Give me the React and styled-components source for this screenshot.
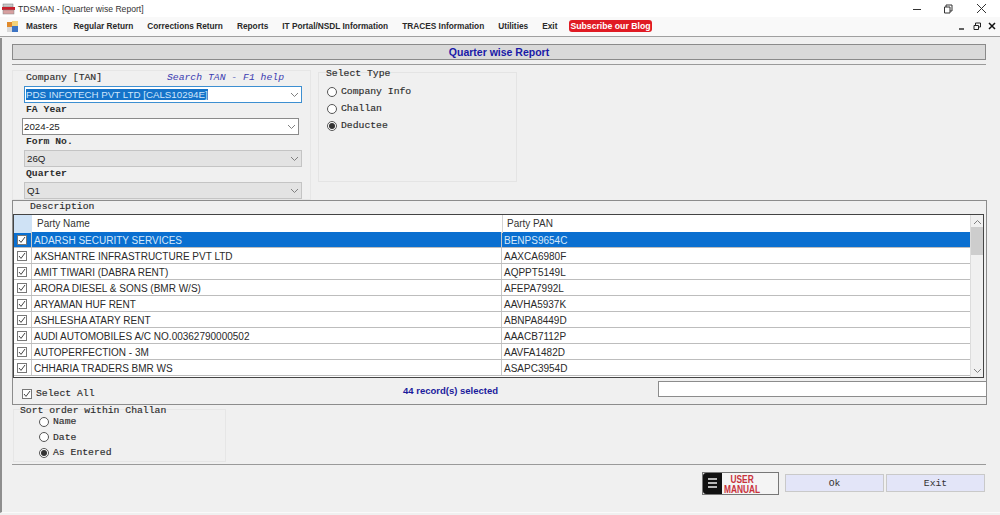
import styled, { createGlobalStyle } from 'styled-components';

const GlobalStyle = createGlobalStyle`
  html, body {
    margin: 0;
    padding: 0;
    background: #f0f0f0;
    overflow: hidden;
  }
`;

const Page = styled.div`
  width: 1000px;
  height: 515px;
  overflow: hidden;
  display: flex;
  flex-direction: column;
  background: #f0f0f0;
  font-family: "Liberation Sans", Arial, sans-serif;
`;

const TitleBar = styled.div`
  height: 17px;
  flex: none;
  display: flex;
  align-items: center;
  background: #fff;
  padding-left: 2px;
  font-size: 8.6px;
  color: #333;
`;

const TitleText = styled.span`
  margin-left: 3px;
`;

const WindowButtons = styled.div`
  margin-left: auto;
  display: flex;
  align-items: center;
  gap: 21px;
  padding-right: 13px;
  svg:last-child {
    margin-left: 2px;
  }
`;

const MenuBar = styled.div`
  height: 20px;
  flex: none;
  box-sizing: border-box;
  display: flex;
  align-items: center;
  padding: 0 0 1px 7px;
  background: #f9f9f9;
  border-bottom: 1px solid #a0a0a0;
`;

const MenuItems = styled.div`
  display: flex;
  align-items: center;
  gap: 14px;
  margin-left: 8px;
`;

const MenuItem = styled.span`
  font-size: 8.3px;
  font-weight: 700;
  color: #2a2a2a;
  white-space: nowrap;
  &:first-child {
    margin-right: 2px;
  }
`;

const BlogBadge = styled.span`
  font-size: 8.7px;
  font-weight: 700;
  color: #fff;
  background: #e01b24;
  border-radius: 3px;
  padding: 1px 1px;
  margin-left: -2px;
  white-space: nowrap;
`;

const MdiButtons = styled.div`
  margin-left: auto;
  display: flex;
  align-items: center;
  gap: 7px;
  padding-right: 4px;
`;

const Body = styled.div`
  flex: 1;
  min-height: 0;
  margin: 1px 0 2px;
  border-left: 2px solid #8e8e8e;
  border-bottom: 1px solid #fafafa;
  padding: 6px 14px 0 10px;
`;

const ReportHeader = styled.div`
  height: 14px;
  background: #d9d9d9;
  border: 1px solid #8a8a8a;
  text-align: center;
  font-size: 10.5px;
  font-weight: 700;
  line-height: 14px;
  color: #1a1aa8;
`;

const Rule = styled.div`
  height: 1px;
  background: #9a9a9a;
  margin-top: ${({ $top }) => $top}px;
`;

const TopRow = styled.div`
  display: flex;
  height: 135px;
`;

const FormPanel = styled.div`
  width: 299px;
  height: 130px;
  margin-top: 5px;
  border: 1px solid #e6e6e6;
  box-sizing: border-box;
  padding: 0 8px 0 11px;
  display: flex;
  flex-direction: column;
`;

const Mono = styled.span`
  font-family: "Liberation Mono", "Courier New", monospace;
  font-size: 9.75px;
  color: #2d2d2d;
  white-space: nowrap;
  -webkit-text-stroke: 0.15px #2d2d2d;
`;

const FieldLabel = styled(Mono)`
  display: flex;
  justify-content: space-between;
  height: 15px;
  line-height: 14px;
  padding-left: 2px;
  font-weight: ${({ $bold }) => ($bold ? 700 : 400)};
  -webkit-text-stroke: ${({ $bold }) => ($bold ? '0' : '0.15px #2d2d2d')};
`;

const HelpText = styled.i`
  color: #3b3bb0;
  -webkit-text-stroke: 0;
  margin-right: 18px;
`;

const Combo = styled.div`
  height: 17px;
  box-sizing: border-box;
  display: flex;
  align-items: center;
  margin-left: ${({ $shift }) => $shift || 0}px;
  margin-right: ${({ $shift }) => ($shift ? 3 : 0)}px;
  padding: 0 2px 0 ${({ $off }) => ($off ? 2 : 1)}px;
  border: 1px solid ${({ $accent, $off }) => ($accent ? '#3d8fd1' : $off ? '#c4c4c4' : '#8a8a8a')};
  background: ${({ $off }) => ($off ? '#e3e3e3' : '#fff')};
  font-size: 9.75px;
  color: #222;
  svg {
    margin-left: auto;
  }
`;

const SelectedText = styled.span`
  background: #1573c9;
  color: #cfe6fb;
`;

const TypeBox = styled.div`
  width: 199px;
  height: 110px;
  margin: 7px 0 0 7px;
  box-sizing: border-box;
  border: 1px solid #e4e4e4;
  padding: 0 0 0 7px;
`;

const BoxTitle = styled(Mono)`
  display: block;
  height: 10px;
  line-height: 10px;
  margin-top: -4px;
`;

const RadioList = styled.div`
  display: flex;
  flex-direction: column;
  gap: ${({ $gap }) => $gap}px;
  margin-top: ${({ $top }) => $top}px;
  margin-left: ${({ $left }) => $left || 0}px;
`;

const RadioRow = styled.div`
  display: flex;
  align-items: center;
  gap: 4px;
  height: 11px;
`;

const RadioCircle = styled.span`
  width: 10px;
  height: 10px;
  box-sizing: border-box;
  flex: none;
  border-radius: 50%;
  border: 1px solid #555;
  background: #fff;
  display: flex;
  align-items: center;
  justify-content: center;
  &::after {
    content: '';
    display: ${({ $on }) => ($on ? 'block' : 'none')};
    width: 6px;
    height: 6px;
    border-radius: 50%;
    background: #333;
  }
`;

const DescriptionBox = styled.div`
  height: 205px;
  box-sizing: border-box;
  border: 1px solid #8c8c8c;
  width: 975px;
`;

const DescriptionTitle = styled(Mono)`
  display: block;
  height: 13px;
  line-height: 12px;
  padding-left: 17px;
`;

const GridFrame = styled.div`
  display: flex;
  height: 164px;
  box-sizing: border-box;
  margin-right: 2px;
  border: 1px solid #444;
  background: #fff;
`;

const GridBody = styled.div`
  flex: 1;
  min-width: 0;
`;

const GridRow = styled.div`
  display: grid;
  grid-template-columns: 18px 470px 1fr;
  height: 16px;
  box-sizing: border-box;
  border-bottom: 1px solid #bdbdbd;
  font-size: 10px;
  line-height: 17px;
  color: ${({ $active }) => ($active ? '#d5e8fa' : '#2a2a2a')};
  background: ${({ $active }) => ($active ? '#0a6fd0' : '#fff')};
`;

const HeaderRow = styled(GridRow)`
  height: 17px;
  border-bottom: none;
  line-height: 18px;
  color: #333;
`;

const CornerCell = styled.div`
  background: #cfe2f5;
`;

const HeaderCell = styled.div`
  padding-left: ${({ $pad }) => $pad}px;
  border-left: ${({ $line }) => ($line ? '1px solid #d4d4d4' : 'none')};
`;

const CheckCell = styled.div`
  display: flex;
  align-items: center;
  justify-content: center;
  padding-right: 1px;
  border-right: 1px solid #c8c8c8;
`;

const TextCell = styled.div`
  padding-left: 2px;
  white-space: nowrap;
  overflow: hidden;
  border-right: ${({ $line }) => ($line ? '1px solid #c8c8c8' : 'none')};
`;

const CheckMark = styled.span`
  width: 10px;
  height: 10px;
  box-sizing: border-box;
  flex: none;
  display: flex;
  align-items: center;
  justify-content: center;
  border: 1px solid #777;
  background: #fff;
`;

const ScrollBar = styled.div`
  width: 13px;
  flex: none;
  display: flex;
  flex-direction: column;
  align-items: center;
  background: #f0f0f0;
  border-left: 1px solid #dcdcdc;
  padding: 4px 0 3px;
  box-sizing: border-box;
`;

const ScrollThumb = styled.div`
  width: 100%;
  height: 28px;
  margin-top: 2px;
  background: #cdcdcd;
`;

const ScrollEnd = styled.div`
  margin-top: auto;
  line-height: 0;
`;

const FooterRow = styled.div`
  display: flex;
  align-items: flex-start;
  padding-top: 3px;
`;

const SelectAll = styled.div`
  width: 390px;
  display: flex;
  align-items: center;
  gap: 4px;
  padding: 7px 0 0 9px;
  box-sizing: border-box;
`;

const RecordCount = styled.span`
  width: 255px;
  padding-top: 4px;
  font-size: 9.5px;
  font-weight: 700;
  color: #1a1a9c;
`;

const SearchInput = styled.div`
  flex: 1;
  height: 16px;
  margin-right: -1px;
  box-sizing: border-box;
  border: 1px solid #8c8c8c;
  background: #fff;
`;

const SortBox = styled.div`
  width: 213px;
  height: 53px;
  margin: 4px 0 0 1px;
  box-sizing: border-box;
  border: 1px solid #e6e6e6;
  padding-left: 6px;
`;

const ActionBar = styled.div`
  display: flex;
  align-items: flex-start;
  justify-content: flex-end;
  padding-top: 7px;
  width: 973px;
`;

const ManualButton = styled.div`
  width: 77px;
  height: 23px;
  box-sizing: border-box;
  border: 1px solid #777;
  background: #f4f4f4;
  display: flex;
  align-items: center;
  margin-right: 6px;
`;

const ManualText = styled.span`
  font-size: 11px;
  line-height: 10px;
  font-weight: 700;
  color: #c8323c;
  margin-left: 1px;
  text-align: center;
  transform: scaleX(0.76);
  transform-origin: left center;
`;

const ActionButton = styled.button`
  width: 99px;
  height: 18px;
  box-sizing: border-box;
  margin: 2px 0 0 ${({ $left }) => $left || 0}px;
  padding: 0;
  border: 1px solid #c9c9c9;
  background: #e3e5f8;
  font-family: "Liberation Mono", "Courier New", monospace;
  font-size: 9.75px;
  color: #333;
`;

const parties = [
  ['ADARSH SECURITY SERVICES', 'BENPS9654C'],
  ['AKSHANTRE INFRASTRUCTURE PVT LTD', 'AAXCA6980F'],
  ['AMIT TIWARI  (DABRA RENT)', 'AQPPT5149L'],
  ['ARORA DIESEL & SONS (BMR W/S)', 'AFEPA7992L'],
  ['ARYAMAN HUF RENT', 'AAVHA5937K'],
  ['ASHLESHA ATARY RENT', 'ABNPA8449D'],
  ['AUDI AUTOMOBILES A/C NO.00362790000502', 'AAACB7112P'],
  ['AUTOPERFECTION - 3M', 'AAVFA1482D'],
  ['CHHARIA TRADERS BMR WS', 'ASAPC3954D'],
];

const menus = [
  'Masters',
  'Regular Return',
  'Corrections Return',
  'Reports',
  'IT Portal/NSDL Information',
  'TRACES Information',
  'Utilities',
  'Exit',
];

const Chevron = ({ color = '#808080', up = false }) => (
  <svg width="9" height="6" viewBox="0 0 9 6">
    <path d={up ? 'M1 5 L4.5 1.5 L8 5' : 'M1 1 L4.5 4.5 L8 1'} fill="none" stroke={color} strokeWidth="1" />
  </svg>
);

const Check = () => (
  <CheckMark>
    <svg width="8" height="8" viewBox="0 0 8 8">
      <path d="M1 4 L3 6.4 L7 1" fill="none" stroke="#444" strokeWidth="1" />
    </svg>
  </CheckMark>
);

const Radio = ({ label, on }) => (
  <RadioRow>
    <RadioCircle $on={on} />
    <Mono>{label}</Mono>
  </RadioRow>
);

const AppIcon = () => (
  <svg width="13" height="12" viewBox="0 0 13 12">
    <rect x="1" y="1" width="10" height="3" fill="#c9c9c9" stroke="#777" strokeWidth="0.5" />
    <rect x="0" y="4" width="13" height="3" fill="#c8202c" />
    <rect x="1" y="7" width="11" height="4" fill="#d8a0a0" stroke="#888" strokeWidth="0.5" />
  </svg>
);

const DocIcon = () => (
  <svg width="11" height="11" viewBox="0 0 11 11">
    <rect x="0" y="1" width="5" height="5" fill="#e08a2c" />
    <rect x="5" y="0" width="6" height="5" fill="#f3d27a" />
    <rect x="0" y="6" width="5" height="5" fill="#d9d9d9" />
    <rect x="5" y="5" width="6" height="6" fill="#3d74c4" />
  </svg>
);

const ManualIcon = () => (
  <svg width="20" height="21" viewBox="0 0 20 21">
    <path d="M3 0 H19 V21 H3 Q0 21 0 18 V3 Q0 0 3 0 Z" fill="#111" />
    <path d="M5 6 H14 M5 10 H14 M5 14 H14" stroke="#eee" strokeWidth="1.4" />
  </svg>
);

const App = () => {
  return (
    <Page>
      <GlobalStyle />
      <TitleBar>
        <AppIcon />
        <TitleText>TDSMAN - [Quarter wise Report]</TitleText>
        <WindowButtons>
          <svg width="10" height="10" viewBox="0 0 10 10">
            <path d="M1 5.5 H9" stroke="#333" />
          </svg>
          <svg width="10" height="10" viewBox="0 0 10 10">
            <path d="M1.5 3 H7 V9 H1.5 Z M3 3 V1 H9 V7 H7" fill="none" stroke="#333" />
          </svg>
          <svg width="11" height="11" viewBox="0 0 11 11">
            <path d="M1 1 L10 10 M10 1 L1 10" stroke="#333" />
          </svg>
        </WindowButtons>
      </TitleBar>

      <MenuBar>
        <DocIcon />
        <MenuItems>
          {menus.map((menu) => (
            <MenuItem key={menu}>{menu}</MenuItem>
          ))}
          <BlogBadge>Subscribe our Blog</BlogBadge>
        </MenuItems>
        <MdiButtons>
          <svg width="8" height="8" viewBox="0 0 8 8">
            <path d="M1 7 H6" stroke="#222" strokeWidth="1.4" />
          </svg>
          <svg width="8" height="8" viewBox="0 0 8 8">
            <path d="M1 3.5 H5.5 V7.5 H1 Z M2.5 3 V1 H7.5 V5 H6" fill="none" stroke="#222" />
          </svg>
          <svg width="8" height="8" viewBox="0 0 8 8">
            <path d="M1 1 L7 7 M7 1 L1 7" stroke="#111" strokeWidth="1.5" />
          </svg>
        </MdiButtons>
      </MenuBar>

      <Body>
        <ReportHeader>Quarter wise Report</ReportHeader>
        <Rule $top={4} />

        <TopRow>
          <FormPanel>
            <FieldLabel>
              Company [TAN]
              <HelpText>Search TAN - F1 help</HelpText>
            </FieldLabel>
            <Combo $accent>
              <SelectedText>PDS INFOTECH PVT LTD [CALS10294E]</SelectedText>
              <Chevron />
            </Combo>
            <FieldLabel $bold>FA Year</FieldLabel>
            <Combo $shift={-2}>
              2024-25
              <Chevron />
            </Combo>
            <FieldLabel $bold>Form No.</FieldLabel>
            <Combo $off>
              26Q
              <Chevron />
            </Combo>
            <FieldLabel $bold>Quarter</FieldLabel>
            <Combo $off>
              Q1
              <Chevron />
            </Combo>
          </FormPanel>

          <TypeBox>
            <BoxTitle>Select Type</BoxTitle>
            <RadioList $gap={6} $top={7} $left={1}>
              <Radio label="Company Info" />
              <Radio label="Challan" />
              <Radio label="Deductee" on />
            </RadioList>
          </TypeBox>
        </TopRow>

        <DescriptionBox>
          <DescriptionTitle>Description</DescriptionTitle>
          <GridFrame>
            <GridBody>
              <HeaderRow>
                <CornerCell />
                <HeaderCell $pad={5}>Party Name</HeaderCell>
                <HeaderCell $pad={4} $line>Party PAN</HeaderCell>
              </HeaderRow>
              {parties.map(([name, pan], index) => (
                <GridRow key={pan} $active={index === 0}>
                  <CheckCell>
                    <Check />
                  </CheckCell>
                  <TextCell $line>{name}</TextCell>
                  <TextCell>{pan}</TextCell>
                </GridRow>
              ))}
            </GridBody>
            <ScrollBar>
              <Chevron up />
              <ScrollThumb />
              <ScrollEnd>
                <Chevron />
              </ScrollEnd>
            </ScrollBar>
          </GridFrame>
          <FooterRow>
            <SelectAll>
              <Check />
              <Mono>Select All</Mono>
            </SelectAll>
            <RecordCount>44 record(s) selected</RecordCount>
            <SearchInput />
          </FooterRow>
        </DescriptionBox>

        <SortBox>
          <BoxTitle>Sort order within Challan</BoxTitle>
          <RadioList $gap={4.5} $top={0} $left={19}>
            <Radio label="Name" />
            <Radio label="Date" />
            <Radio label="As Entered" on />
          </RadioList>
        </SortBox>
        <Rule $top={2} />

        <ActionBar>
          <ManualButton>
            <ManualIcon />
            <ManualText>
              USER
              <br />
              MANUAL
            </ManualText>
          </ManualButton>
          <ActionButton>Ok</ActionButton>
          <ActionButton $left={2}>Exit</ActionButton>
        </ActionBar>
      </Body>
    </Page>
  );
};

export default App;
